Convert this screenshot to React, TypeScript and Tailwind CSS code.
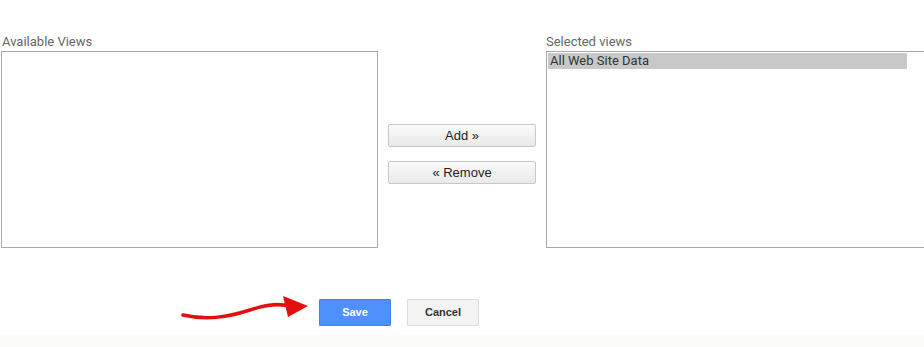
import React from "react";

export default function App() {
  return (
    <div className="relative w-[924px] h-[347px] bg-white overflow-hidden" style={{ fontFamily: "Roboto, 'Liberation Sans', Arial, sans-serif" }}>
      <div className="flex pt-[33px]">
        <div className="ml-[1px] w-[377px] shrink-0 flex flex-col">
          <div className="text-[13px] leading-[18px] text-[#666] pl-[1px]">Available Views</div>
          <div className="h-[197px] border border-[#a9a9a9] bg-white"></div>
        </div>
        <div className="ml-[10px] w-[148px] shrink-0 flex flex-col gap-[14px] pt-[91px]">
          <button className="h-[23px] border border-[#c8c8c8] rounded-[2px] bg-gradient-to-b from-[#fafafa] to-[#e9e9e9] text-[13px] text-[#222]" style={{ fontFamily: "'Liberation Sans', Arial, sans-serif" }}>Add »</button>
          <button className="h-[23px] border border-[#c8c8c8] rounded-[2px] bg-gradient-to-b from-[#fafafa] to-[#e9e9e9] text-[13px] text-[#222]" style={{ fontFamily: "'Liberation Sans', Arial, sans-serif" }}>« Remove</button>
        </div>
        <div className="ml-[10px] w-[400px] shrink-0 flex flex-col">
          <div className="text-[13px] leading-[18px] text-[#666]">Selected views</div>
          <div className="h-[197px] border border-[#a9a9a9] bg-white p-[1px]">
            <div className="w-[359px] h-[16px] bg-[#c8c8c8] text-[13px] leading-[16px] text-[#333] pl-[2px]">All Web Site Data</div>
          </div>
        </div>
      </div>
      <div className="flex mt-[51px] ml-[319px] gap-[16px]">
        <button className="w-[72px] h-[27px] shrink-0 bg-[#4d90fe] border border-[#3d80ee] text-white text-[11px] font-bold rounded-[1px]" style={{ fontFamily: "Arial, 'Liberation Sans', sans-serif" }}>Save</button>
        <button className="w-[72px] h-[27px] shrink-0 bg-[#f3f3f3] border border-[#dcdcdc] text-[#333] text-[11px] font-bold rounded-[1px]" style={{ fontFamily: "Arial, 'Liberation Sans', sans-serif" }}>Cancel</button>
      </div>
      <div className="absolute left-0 right-0 top-[335px] h-[12px] bg-[#fbfcfa]"></div>
      <svg className="absolute left-[180px] top-[294px]" width="132" height="30" viewBox="0 0 132 30">
        <path d="M3 21 C 25 26, 45 24, 70 16 C 88 10, 100 9, 112 13" stroke="#e41010" strokeWidth="3.5" fill="none" strokeLinecap="round" />
        <polygon points="103,2 128,12 108,23" fill="#e41010" />
      </svg>
    </div>
  );
}
